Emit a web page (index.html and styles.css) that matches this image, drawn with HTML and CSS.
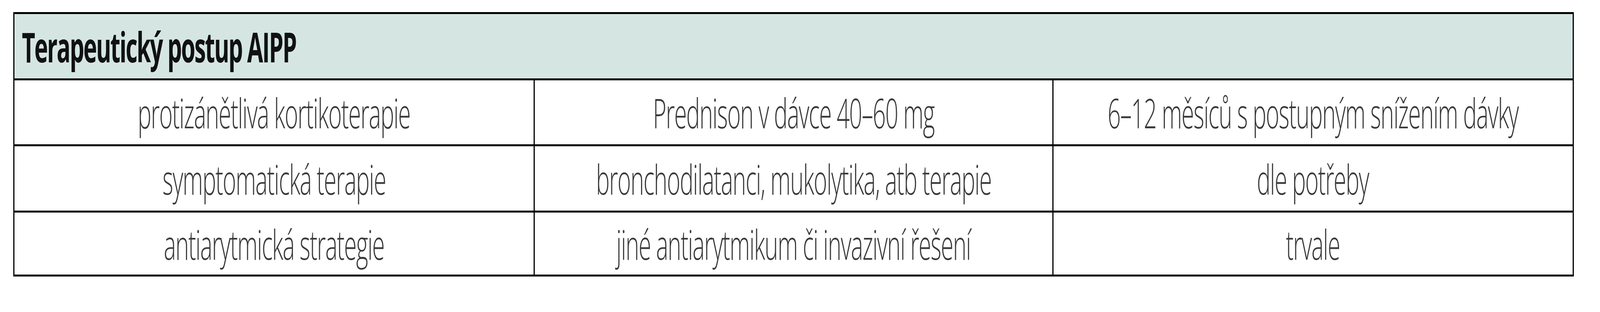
FILE: index.html
```html
<!DOCTYPE html>
<html lang="cs">
<head>
<meta charset="utf-8">
<title>Terapeutický postup AIPP</title>
<link rel="stylesheet" href="styles.css">
</head>
<body>
<div class="tbl">
  <div class="cell head"><span class="txt">Terapeutický postup AIPP</span></div>
  <div class="cell"><span class="txt">protizánětlivá kortikoterapie</span></div>
  <div class="cell"><span class="txt">Prednison v dávce 40–60 mg</span></div>
  <div class="cell"><span class="txt">6–12 měsíců s postupným snížením dávky</span></div>
  <div class="cell"><span class="txt">symptomatická terapie</span></div>
  <div class="cell"><span class="txt">bronchodilatanci, mukolytika, atb terapie</span></div>
  <div class="cell"><span class="txt">dle potřeby</span></div>
  <div class="cell"><span class="txt">antiarytmická strategie</span></div>
  <div class="cell"><span class="txt">jiné antiarytmikum či invazivní řešení</span></div>
  <div class="cell"><span class="txt">trvale</span></div>
</div>
</body>
</html>
```
FILE: styles.css
```css
html, body {
  margin: 0;
  padding: 0;
  background: #ffffff;
}

/* horizontal geometry follows the frame width (reference is 7364 px wide),
   vertical geometry is fixed to the 800 px frame height */
:root {
  --sx: tan(atan2(100vw, 7364px));
}

.tbl {
  box-sizing: border-box;
  display: grid;
  grid-template-columns: 2395fr 2387fr 2395fr;
  grid-template-rows: 170px 169px 170px 164px;
  width: 97.53vw;
  margin: 31px 0 0 0.828vw;
  border-top: 5px solid #000;
  border-left: 0.075vw solid #000;
  font-family: "Open Sans", "Noto Sans", sans-serif;
  font-size: 106px;
  line-height: 1;
  letter-spacing: -0.025em;
}

.cell {
  box-sizing: border-box;
  min-width: 0;
  border-right: 0.075vw solid #000;
  border-bottom: 5px solid #000;
  display: flex;
  align-items: center;
  justify-content: center;
  color: #3a3a3a;
  font-weight: 300;
  white-space: nowrap;
}

.txt {
  display: block;
  flex: none;
  transform: scaleX(var(--sx));
  transform-origin: 50% 50%;
}

.head {
  grid-column: 1 / -1;
  justify-content: flex-start;
  padding-left: 0.475vw;
  background: #d5e6e2;
  color: #111111;
  font-weight: 700;
  letter-spacing: -0.038em;
}

.head .txt {
  transform-origin: 0 50%;
}
```
